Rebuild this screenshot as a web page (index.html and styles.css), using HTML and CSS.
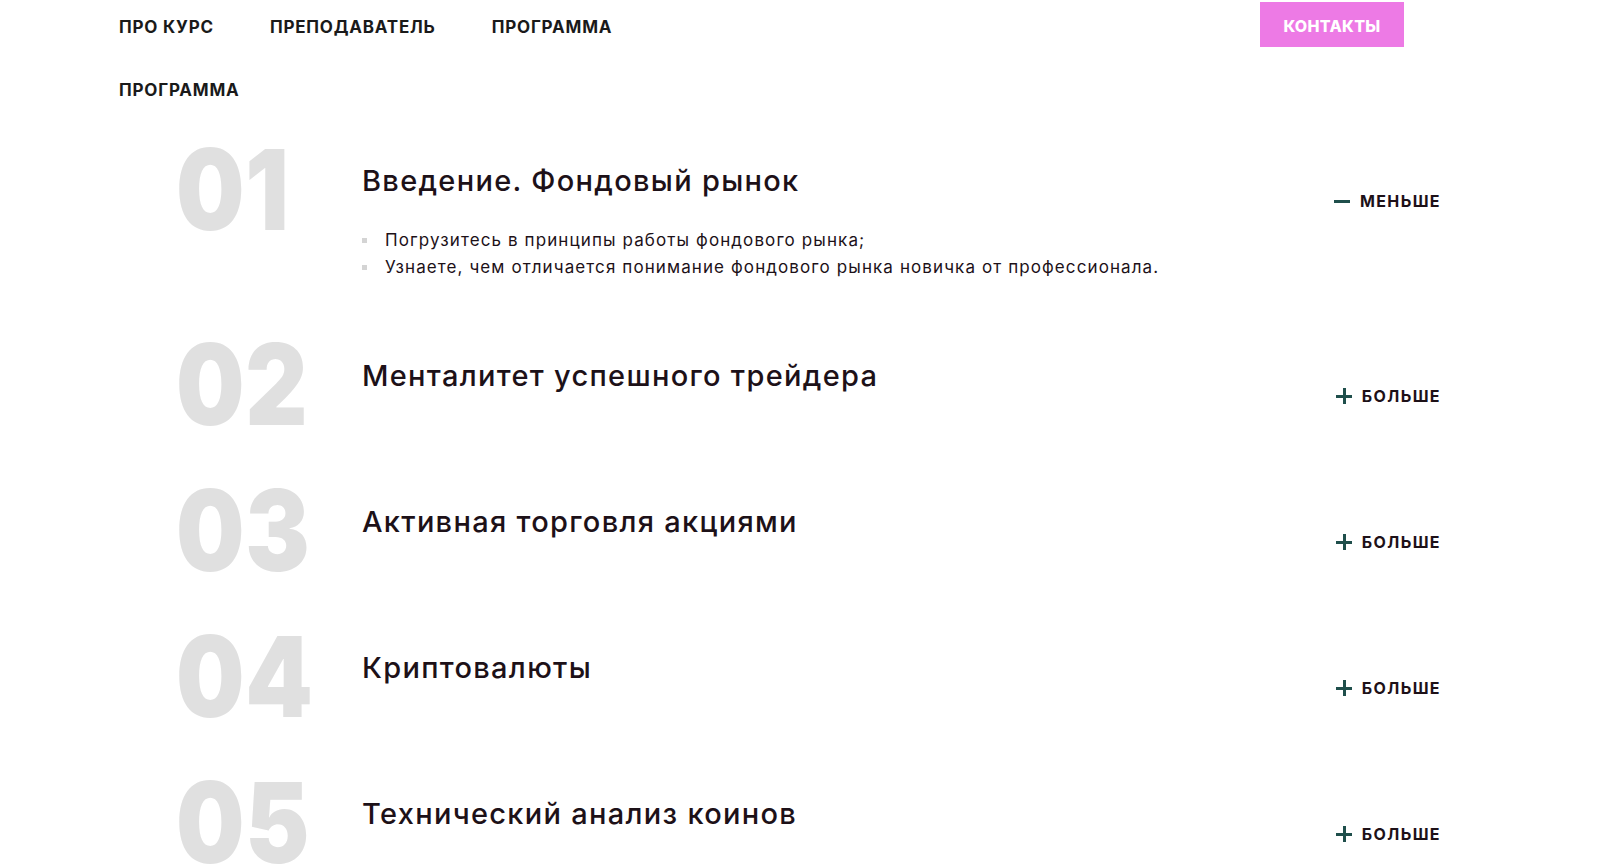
FILE: index.html
```html
<!DOCTYPE html>
<html lang="ru">
<head>
  <meta charset="UTF-8" />
  <meta name="viewport" content="width=device-width, initial-scale=1.0" />
  <title>Программа курса</title>
  <link rel="stylesheet" href="styles.css">
</head>
<body>
  <header class="header">
    <nav class="nav">
      <a href="#about">Про курс</a>
      <a href="#teacher">Преподаватель</a>
      <a href="#program">Программа</a>
    </nav>
    <a href="#contacts" class="btn-contacts">Контакты</a>
  </header>

  <section class="program" id="program">
    <h2 class="section-title">Программа</h2>

    <div class="lesson open">
      <div class="lesson-num"><span>01</span></div>
      <div class="lesson-body">
        <h3>Введение. Фондовый рынок</h3>
        <ul class="lesson-list">
          <li>Погрузитесь в принципы работы фондового рынка;</li>
          <li>Узнаете, чем отличается понимание фондового рынка новичка от профессионала.</li>
        </ul>
      </div>
      <button class="toggle"><span class="icon minus"></span>Меньше</button>
    </div>

    <div class="lesson">
      <div class="lesson-num"><span>02</span></div>
      <div class="lesson-body">
        <h3>Менталитет успешного трейдера</h3>
      </div>
      <button class="toggle"><span class="icon plus"></span>Больше</button>
    </div>

    <div class="lesson">
      <div class="lesson-num"><span>03</span></div>
      <div class="lesson-body">
        <h3>Активная торговля акциями</h3>
      </div>
      <button class="toggle"><span class="icon plus"></span>Больше</button>
    </div>

    <div class="lesson">
      <div class="lesson-num"><span>04</span></div>
      <div class="lesson-body">
        <h3>Криптовалюты</h3>
      </div>
      <button class="toggle"><span class="icon plus"></span>Больше</button>
    </div>

    <div class="lesson">
      <div class="lesson-num"><span>05</span></div>
      <div class="lesson-body">
        <h3>Технический анализ коинов</h3>
      </div>
      <button class="toggle"><span class="icon plus"></span>Больше</button>
    </div>
  </section>
</body>
</html>
```

FILE: styles.css
```css
body {
  margin: 0;
  padding: 0;
  background-color: #fff;
  font-family: Inter, "Noto Sans", sans-serif;
  color: #1d1118;
  overflow: hidden;
}

.header {
  display: flex;
  justify-content: space-between;
  align-items: flex-start;
  padding: 2px 196px 0 119px;
}

.nav {
  display: flex;
  gap: 56px;
  padding-top: 15px;
}

.nav a {
  text-decoration: none;
  text-transform: uppercase;
  font-weight: 700;
  font-size: 17px;
  letter-spacing: 0.8px;
  color: #1a1a1a;
}

.btn-contacts {
  display: block;
  width: 144px;
  height: 42px;
  padding-top: 3px;
  line-height: 42px;
  text-align: center;
  background-color: #ed7ae5;
  color: #fff;
  text-decoration: none;
  text-transform: uppercase;
  font-weight: 800;
  font-size: 16px;
  letter-spacing: 0.3px;
}

.section-title {
  margin: 33px 0 0 119px;
  font-size: 17px;
  font-weight: 700;
  letter-spacing: 0.8px;
  text-transform: uppercase;
  color: #1a1a1a;
}

.program {
  padding-bottom: 40px;
}

.lesson {
  display: flex;
  align-items: flex-start;
  margin: 0 159px 34px 176px;
}

.lesson:first-of-type {
  margin-top: 33px;
}

.lesson-num {
  width: 186px;
  flex-shrink: 0;
  font-size: 112px;
  line-height: 1;
  font-weight: 900;
  color: #e0e0e0;
}

.lesson-num span {
  display: inline-block;
  letter-spacing: 1px;
  transform: scaleX(0.86);
  transform-origin: left center;
}

.lesson-body {
  flex: 1;
  padding-top: 31px;
}

.lesson-body h3 {
  margin: 0;
  font-size: 29px;
  line-height: 34px;
  font-weight: 500;
  letter-spacing: 1.3px;
}

.lesson-list {
  list-style: none;
  margin: 29px 0 13px;
  padding: 0;
}

.lesson-list li {
  position: relative;
  padding-left: 23px;
  font-size: 17px;
  line-height: 27px;
  letter-spacing: 1.1px;
}

.lesson-list li::before {
  content: "";
  position: absolute;
  left: 0;
  top: 11px;
  width: 5px;
  height: 5px;
  background: #d4d4d4;
}

.toggle {
  display: flex;
  align-items: center;
  gap: 10px;
  margin-top: 58px;
  padding: 0;
  border: none;
  background: none;
  font-family: inherit;
  font-weight: 700;
  font-size: 16px;
  letter-spacing: 1.4px;
  text-transform: uppercase;
  color: #1d1118;
  cursor: pointer;
}

.icon {
  position: relative;
  width: 16px;
  height: 16px;
}

.icon::before,
.icon::after {
  content: "";
  position: absolute;
  background: #1f4f4b;
}

.icon::before {
  left: 0;
  top: 7px;
  width: 16px;
  height: 3px;
}

.plus::after {
  left: 7px;
  top: 0;
  width: 3px;
  height: 16px;
}
```
